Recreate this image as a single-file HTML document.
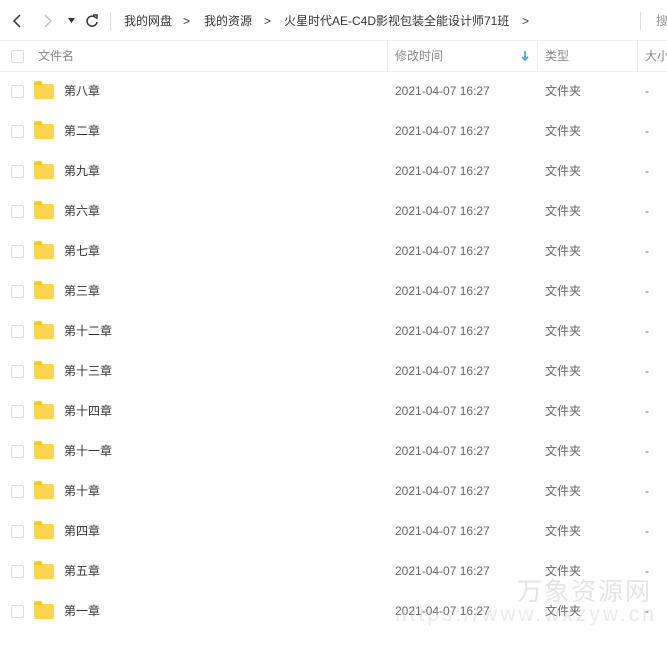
<!DOCTYPE html>
<html><head><meta charset="utf-8"><style>
body{margin:0;width:667px;height:650px;overflow:hidden;background:#fff;font-family:"Liberation Sans","Noto Sans CJK SC",sans-serif;font-size:12px;line-height:16px;color:#333;position:relative}
.top{position:absolute;left:0;top:5px;width:667px;height:32px}
.abs{position:absolute;white-space:nowrap;line-height:16px}
.hdr{position:absolute;top:40px;left:0;width:667px;height:30px;border-bottom:1px solid #f0f0f0;border-top:1px solid #f0f0f0;color:#888}
.vl{position:absolute;top:0;height:30px;width:1px;background:#eee}
.cb{position:absolute;width:11px;height:11px;border:1px solid #ddd;border-radius:2px;background:#fff}
.row{position:absolute;left:0;width:667px;height:40px}
.fold{position:absolute;left:34px;top:13px;width:20px;height:15px;background:#ffd54f;border-radius:2px}
.fold:before{content:"";position:absolute;left:0;top:-3px;width:8px;height:4px;background:#ffc928;border-radius:2px 2px 0 0}
.t{position:absolute;top:12px;color:#666;line-height:16px;white-space:nowrap}
.bc{font-size:12px;color:#333;top:8px}
</style></head><body>
<div class="top">
<svg class="abs" style="left:11px;top:8px" width="12" height="16"><path d="M9 2L3 8l6 6" stroke="#333" stroke-width="1.5" fill="none"/></svg>
<svg class="abs" style="left:42px;top:8px" width="12" height="16"><path d="M3 2l6 6-6 6" stroke="#bbb" stroke-width="1.3" fill="none"/></svg>
<svg class="abs" style="left:68px;top:13px" width="8" height="6"><path d="M0 0h7L3.5 5z" fill="#333"/></svg>
<svg class="abs" style="left:84px;top:8px" width="16" height="16"><path d="M12 5A5 5 0 1 0 13 9" stroke="#333" stroke-width="1.5" fill="none"/><path d="M9 2h4v4" stroke="#333" stroke-width="1.5" fill="none"/></svg>
<div class="abs" style="left:110px;top:7px;width:1px;height:18px;background:#ddd"></div>
<div class="abs bc" style="left:124px">我的网盘</div>
<div class="abs bc" style="left:183px">&gt;</div>
<div class="abs bc" style="left:204px">我的资源</div>
<div class="abs bc" style="left:264px">&gt;</div>
<div class="abs bc" style="left:284px">火星时代AE-C4D影视包装全能设计师71班</div>
<div class="abs bc" style="left:522px">&gt;</div>
<div class="abs" style="left:640px;top:7px;width:1px;height:18px;background:#ddd"></div>
<div class="abs bc" style="left:656px;color:#999">搜</div>
</div>
<div class="hdr">
<div class="cb" style="left:11px;top:9px"></div>
<div class="abs" style="left:38px;top:7px">文件名</div>
<div class="vl" style="left:387px"></div>
<div class="abs" style="left:395px;top:7px">修改时间</div>
<svg class="abs" style="left:521px;top:10px" width="8" height="11"><path d="M4 0v9M1 6l3 3 3-3" stroke="#2a9df4" stroke-width="1.5" fill="none"/></svg>
<div class="vl" style="left:537px"></div>
<div class="abs" style="left:545px;top:7px">类型</div>
<div class="vl" style="left:637px"></div>
<div class="abs" style="left:645px;top:7px">大小</div>
</div>
<div id="rows"></div>
<div class="abs" style="left:517px;top:578px;font-size:25px;line-height:28px;color:rgba(180,180,180,.35);letter-spacing:2px">万象资源网</div>
<div class="abs" style="left:395px;top:603px;font-size:21px;line-height:24px;color:rgba(190,190,190,.3);letter-spacing:3px">https://www.wxzyw.cn</div>
<script>
var n=["第八章","第二章","第九章","第六章","第七章","第三章","第十二章","第十三章","第十四章","第十一章","第十章","第四章","第五章","第一章"],h="";
n.forEach(function(s,i){h+='<div class="row" style="top:'+(71+i*40)+'px"><div class="cb" style="left:11px;top:14px"></div><div class="fold"></div><div class="t" style="left:64px;color:#333">'+s+'</div><div class="t" style="left:395px">2021-04-07 16:27</div><div class="t" style="left:545px">文件夹</div><div class="t" style="left:645px">-</div></div>'});
document.getElementById("rows").innerHTML=h;
</script>
</body></html>
